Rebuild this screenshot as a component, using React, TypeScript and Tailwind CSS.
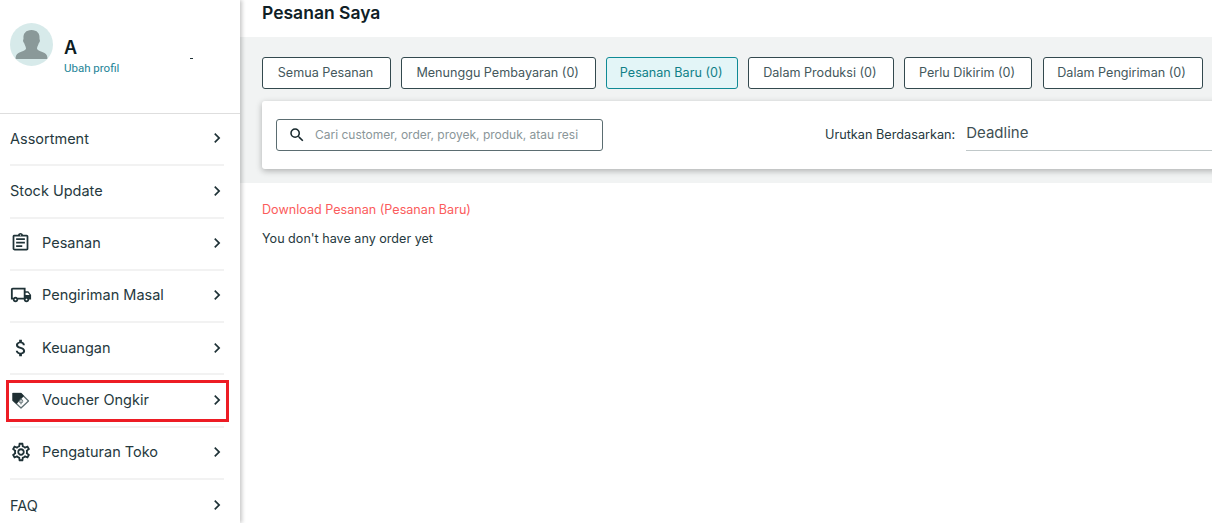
import React from "react";
import {
  MdAttachMoney,
  MdChevronRight,
  MdOutlineAssignment,
  MdOutlineLocalShipping,
  MdOutlineSettings,
  MdSearch,
} from "react-icons/md";

function VoucherIcon() {
  return (
    <svg width="20" height="20" viewBox="0 0 20 20" className="block">
      <path d="M11 3.500 18.500 11 11 18 3 10.500 3 3.500Z" fill="none" stroke="#5d6d70" strokeWidth="1.300" strokeLinejoin="round" />
      <path d="M2.500 3H11.200L14 6 6.500 14 2.500 10.500Z" fill="#1f2f33" />
      <circle cx="11" cy="11.200" r="1.800" fill="none" stroke="#5d6d70" strokeWidth="0.900" />
      <path d="M11 8V14.500" stroke="#5d6d70" strokeWidth="0.800" />
    </svg>
  );
}

function Avatar() {
  return (
    <svg width="43" height="43" viewBox="0 0 43 43" className="block">
      <defs>
        <clipPath id="avatarClip">
          <circle cx="21.500" cy="21.500" r="21.500" />
        </clipPath>
      </defs>
      <circle cx="21.500" cy="21.500" r="21.500" fill="#d7eaea" />
      <g clipPath="url(#avatarClip)" fill="#8a9999">
        <path d="M21.500 7c5.500 0 8.500 3.500 8 8.500-.1 1 .8 1.500.3 3-.4 1.200-1 1.500-1.300 2.500-.5 1.700-1.500 3-1.500 4.500 0 2 5 3 7.500 4.500 2 1 3 3 3 6H5.500c0-3 1-5 3-6 2.500-1.500 7.500-2.500 7.500-4.500 0-1.500-1-2.800-1.500-4.500-.3-1-.9-1.300-1.300-2.500-.5-1.500.4-2 .3-3-.5-5 2.500-8.500 8-8.500Z" />
      </g>
    </svg>
  );
}

const menu: { label: string; icon?: React.ReactNode; boxed?: boolean }[] = [
  { label: "Assortment" },
  { label: "Stock Update" },
  { label: "Pesanan", icon: <MdOutlineAssignment size={21} /> },
  { label: "Pengiriman Masal", icon: <MdOutlineLocalShipping size={22} /> },
  { label: "Keuangan", icon: <MdAttachMoney size={22} /> },
  { label: "Voucher Ongkir", icon: <VoucherIcon />, boxed: true },
  { label: "Pengaturan Toko", icon: <MdOutlineSettings size={22} /> },
  { label: "FAQ" },
];

const tabs = [
  { label: "Semua Pesanan", width: "w-[129px]" },
  { label: "Menunggu Pembayaran (0)", width: "w-[195px]" },
  { label: "Pesanan Baru (0)", width: "w-[131.6px]", active: true },
  { label: "Dalam Produksi (0)", width: "w-[145.5px]" },
  { label: "Perlu Dikirim (0)", width: "w-[128.5px]" },
  { label: "Dalam Pengiriman (0)", width: "w-[160px]" },
];

export default function App() {
  return (
    <div className="flex h-[523px] w-[1212px] overflow-hidden bg-white font-['Inter',sans-serif] text-[#1f3237]">
      {/* Sidebar */}
      <aside className="z-10 h-full w-[240px] shrink-0 bg-white shadow-[2px_0_4px_rgba(0,0,0,0.22)]">
        <div className="flex h-[114px] items-start border-b border-[#dedede] pl-[10px] pt-[23px]">
          <Avatar />
          <div className="ml-[11px] mt-[15px] w-[115px]">
            <div className="text-[18px] font-semibold leading-[20px] text-[#0c1c22]">A</div>
            <div className="mt-[3px] font-['Roboto',sans-serif] text-[11.500px] leading-[14px] text-[#1d8497]">Ubah profil</div>
          </div>
          <div className="ml-[11px] mt-[35px] h-px w-[3px] bg-[#1f3237]" />
        </div>
        <nav className="w-[224px] pl-[10px]">
          {menu.map((item, i) => (
            <div
              key={item.label}
              className={`relative flex h-[52.3px] items-center pb-[1.5px] ${i < menu.length - 1 ? "border-b-2 border-[#f2f2f2]" : ""}`}
            >
              {item.icon && <span className="flex w-[32px] shrink-0 items-center text-[#1f3237]">{item.icon}</span>}
              <span className="flex-1 text-[14.500px] text-[#26393e]">{item.label}</span>
              <MdChevronRight size={20} className="-mr-[3px] text-[#1f3237]" />
              {item.boxed && <div className="absolute -left-[4px] -right-[5px] top-[5px] h-[42px] border-[3px] border-[#ed1c24]" />}
            </div>
          ))}
        </nav>
      </aside>

      {/* Main */}
      <main className="min-w-0 flex-1">
        <h1 className="h-[37px] pl-[22px] pt-[1px] text-[17.500px] font-semibold leading-[24px] text-[#0f2026]">Pesanan Saya</h1>
        <div className="h-[146px] bg-[#f1f3f3] pl-[22px] pt-[20px]">
          <div className="flex gap-[10.2px]">
            {tabs.map((tab) => (
              <button
                key={tab.label}
                type="button"
                className={`h-[32px] shrink-0 rounded-[3px] border pr-[2px] text-[12.600px] ${tab.width} ${
                  tab.active
                    ? "border-[#0f8a95] bg-[#e3f5f7] text-[#0f8087]"
                    : "border-[#33494e] bg-white text-[#44585c]"
                }`}
              >
                {tab.label}
              </button>
            ))}
          </div>
          <div className="mt-[12px] flex h-[68px] w-[970px] items-center rounded-l-[3px] bg-white pl-[14px] shadow-[0_2px_6px_rgba(0,0,0,0.28)]">
            <div className="flex h-[32px] w-[327px] items-center rounded-[3px] border border-[#5b6d71] pl-[11px]">
              <MdSearch size={18} className="text-[#16272c]" />
              <span className="ml-[9px] text-[12px] text-[#8a9699]">Cari customer, order, proyek, produk, atau resi</span>
            </div>
            <span className="ml-[222px] text-[12.700px] text-[#26393e]">Urutkan Berdasarkan:</span>
            <div className="ml-[11px] flex h-[32px] flex-1 items-center border-b border-[#c0c8c9] pb-[3px] text-[15px] text-[#3f4f53]">Deadline</div>
          </div>
        </div>
        <div className="pl-[22px] pt-[18px]">
          <div className="text-[12.600px] leading-[18px] text-[#fb5c5c]">Download Pesanan (Pesanan Baru)</div>
          <div className="mt-[11px] text-[12.600px] leading-[18px] text-[#26393e]">You don't have any order yet</div>
        </div>
      </main>
    </div>
  );
}
